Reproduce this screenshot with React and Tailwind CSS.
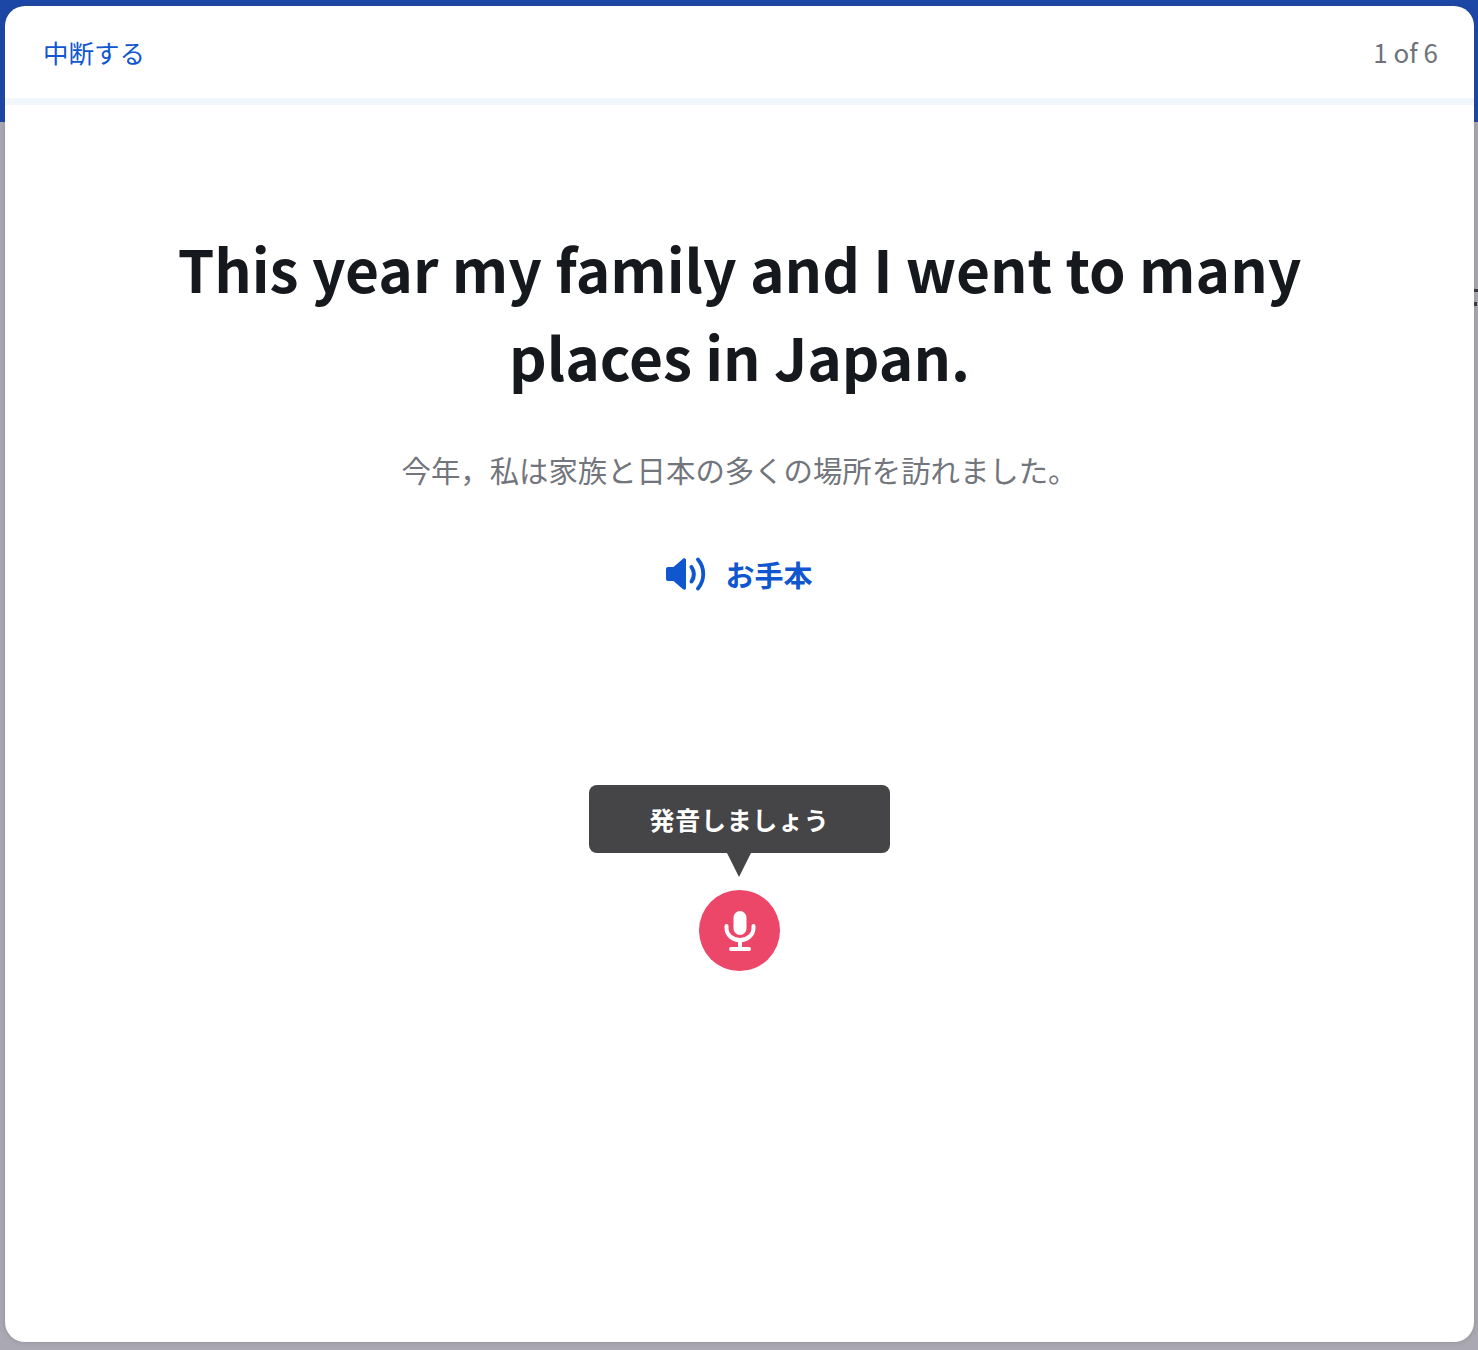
export default function App() {
  return (
    <div className="relative h-[1350px] w-[1478px] overflow-hidden bg-[linear-gradient(to_bottom,#1c47a6_0,#1c47a6_122px,#aaa9b3_122px,#aaa9b3_100%)] pl-[5px] pr-[4px] pt-[6px] font-['Noto_Sans_CJK_JP',sans-serif]">
      {/* clipped bits of the page behind the dialog */}
      <span className="absolute right-0 top-[289px] h-[3px] w-[4px] bg-[#3b3b46]" />
      <span className="absolute right-[1px] top-[302px] h-[4px] w-[3px] bg-[#3b3b46]" />

      <div className="flex h-[1336px] flex-col rounded-[20px] bg-white shadow-[0_0_5px_rgba(60,60,70,0.25)]">
        {/* Header */}
        <div className="flex h-[99px] shrink-0 items-center justify-between border-b-[7px] border-[#f2f6fd] pl-[38px] pr-[36px]">
          <span className="text-[25.500px] leading-none text-[#1056cf]">中断する</span>
          <span className="text-[26px] leading-none text-[#6f7279]">1 of 6</span>
        </div>

        {/* Sentence */}
        <div className="flex flex-col items-center pt-[119px]">
          <h1 className="w-[1200px] text-center text-[58.600px] font-bold leading-[88px] text-[#15181d]">
            This year my family and I went to many places in Japan.
          </h1>
          <p className="mt-[47px] text-[29.400px] leading-[44px] text-[#72757c]">今年，私は家族と日本の多くの場所を訪れました。</p>

          <button className="mt-[66px] flex items-center gap-[19px] text-[#1056cf]">
            <svg width="40" height="34" viewBox="0 0 40 34" fill="none">
              <path d="M0 12a2 2 0 0 1 2-2h5.500L17 1.800c1.300-1 3-.4 3 1.200v28c0 1.600-1.700 2.200-3 1.200L7.500 24H2a2 2 0 0 1-2-2z" fill="currentColor" />
              <path d="M25.500 10c3 4.500 3 10 0 14.500" stroke="currentColor" strokeWidth="4" strokeLinecap="round" />
              <path d="M32 2.500c7 8.500 7 20.500 0 29" stroke="currentColor" strokeWidth="3.800" strokeLinecap="round" />
            </svg>
            <span className="text-[29px] font-bold leading-none">お手本</span>
          </button>

          {/* Record */}
          <div className="relative mt-[194px] flex h-[68px] w-[301px] items-center justify-center rounded-[8px] bg-[#454547] pt-[2px] text-[25px] font-bold tracking-[0.700px] text-white">
            発音しましょう
            <span className="absolute left-[138px] top-[68px] h-0 w-0 border-x-[12.500px] border-t-[24px] border-x-transparent border-t-[#454547]" />
          </div>
          <button className="mt-[37px] flex h-[81px] w-[81px] items-center justify-center rounded-full bg-[#ec4669]">
            <svg width="32" height="40" viewBox="0 0 32 40" fill="none">
              <rect x="9.500" y="0" width="13" height="24" rx="6.500" fill="white" />
              <path d="M2.500 15v2c0 7 6 12 13.500 12s13.500-5 13.500-12v-2" stroke="white" strokeWidth="4" strokeLinecap="round" />
              <path d="M16 30v7" stroke="white" strokeWidth="4" />
              <path d="M7 38h18" stroke="white" strokeWidth="4" strokeLinecap="round" />
            </svg>
          </button>
        </div>
      </div>
    </div>
  );
}
